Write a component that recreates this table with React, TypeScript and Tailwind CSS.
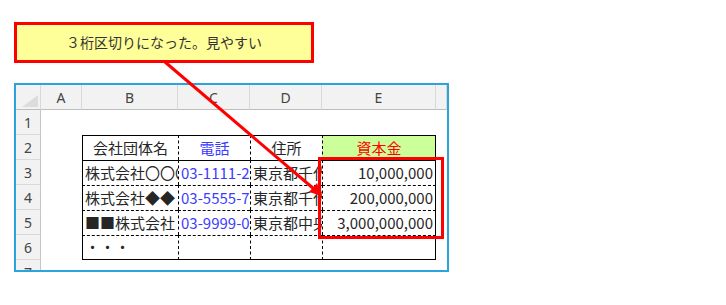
const cjk = "font-['Noto_Sans_CJK_JP',sans-serif]";
const latin = "font-['Noto_Sans','Liberation_Sans',sans-serif]";

const letters = ["A", "B", "C", "D", "E", ""];

// B..E for rows 2-6
const table: { text: string; tone?: string; align?: "left" | "center" | "right"; fill?: string }[][] = [
  [
    { text: "会社団体名", align: "center" },
    { text: "電話", align: "center", tone: "text-[#3c3cff]" },
    { text: "住所", align: "center" },
    { text: "資本金", align: "center", tone: "text-[#ff0000]", fill: "bg-[#ccff99]" },
  ],
  [
    { text: "株式会社〇〇〇" },
    { text: "03-1111-2222", tone: "text-[#3c3cff]" },
    { text: "東京都千代田区" },
    { text: "10,000,000", align: "right" },
  ],
  [
    { text: "株式会社◆◆" },
    { text: "03-5555-7777", tone: "text-[#3c3cff]" },
    { text: "東京都千代田区" },
    { text: "200,000,000", align: "right" },
  ],
  [
    { text: "■■株式会社" },
    { text: "03-9999-0000", tone: "text-[#3c3cff]" },
    { text: "東京都中央区" },
    { text: "3,000,000,000", align: "right" },
  ],
  [{ text: "・・・" }, { text: "" }, { text: "" }, { text: "" }],
];

function borderFor(row: number, col: number) {
  const parts = ["border-black", "border-t", "border-l"];
  if (row >= 4) parts.push("[border-top-style:dashed]");
  if (col !== 0) parts.push("[border-left-style:dashed]");
  if (col === 3) parts.push("border-r");
  if (row === 6) parts.push("border-b");
  return parts.join(" ");
}

function RowHead({ n }: { n: number }) {
  return (
    <div className={`${latin} flex items-center justify-center bg-[#f2f2f2] border-r border-b border-r-[#c6c6c6] border-b-[#d9d9d9] text-[14px] text-[#444]`}>
      {n}
    </div>
  );
}

export default function App() {
  const rows = [1, 2, 3, 4, 5, 6, 7];
  return (
    <div className="relative w-[726px] h-[305px] overflow-hidden bg-white pt-[22px] pl-[14px]">
      {/* callout */}
      <div className={`${cjk} w-[300px] h-[41px] flex items-center justify-center border-[3px] border-[#ff0000] bg-[#ffff99] text-[14px] text-[#333]`}>
        ３桁区切りになった。見やすい
      </div>

      {/* sheet */}
      <div className="mt-[20px] w-[435px] h-[189px] overflow-hidden border-2 border-[#2ba3dc]">
        <div className="grid grid-cols-[25px_41px_96px_72px_72px_114px_1fr] auto-rows-[25px]">
          <div className="relative bg-[#f2f2f2] border-r border-b border-r-[#d9d9d9] border-b-[#bdbdbd]">
            <svg className="absolute left-[6px] top-[10px]" width="16" height="12" viewBox="0 0 16 12">
              <polygon points="16,0 16,12 0,12" fill="#dcdcdc" />
            </svg>
          </div>
          {letters.map((l, i) => (
            <div
              key={i}
              className={`${latin} flex items-center justify-center bg-[#f2f2f2] border-r border-b border-r-[#d9d9d9] border-b-[#bdbdbd] text-[14px] text-[#444]`}
            >
              {l}
            </div>
          ))}

          {rows.map((r) => (
            <div key={r} className="contents">
              <RowHead n={r} />
              <div />
              {r >= 2 && r <= 6 ? (
                table[r - 2].map((c, ci) => (
                  <div
                    key={ci}
                    className={`${cjk} ${borderFor(r, ci)} ${c.fill ?? ""} ${c.tone ?? "text-[#262626]"} flex items-center overflow-hidden whitespace-nowrap text-[15px] ${
                      c.align === "center" ? "justify-center" : c.align === "right" ? "justify-end pr-[2px]" : "justify-start pl-[2px]"
                    }`}
                  >
                    {c.text}
                  </div>
                ))
              ) : (
                <>
                  <div />
                  <div />
                  <div />
                  <div />
                </>
              )}
              <div />
            </div>
          ))}
        </div>
      </div>

      {/* highlight around the capital figures */}
      <div className="absolute left-[318px] top-[157px] w-[126px] h-[82px] border-[3px] border-[#ff0000]" />

      {/* pointer line */}
      <svg className="absolute left-0 top-0 pointer-events-none" width="726" height="305" viewBox="0 0 726 305">
        <line x1="165" y1="62" x2="314" y2="189" stroke="#ff0000" strokeWidth="3" />
        <polygon points="322,196 309,192 317,183" fill="#ff0000" />
      </svg>
    </div>
  );
}
